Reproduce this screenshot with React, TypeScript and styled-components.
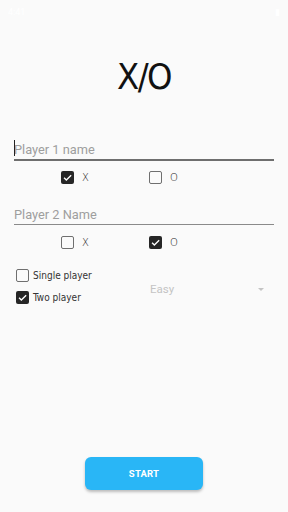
import React, { useState } from "react";
import styled, { createGlobalStyle } from "styled-components";

const Global = createGlobalStyle`
  html, body { margin: 0; padding: 0; background: #fafafa; }
  #root { height: 512px; }
`;

const Screen = styled.div`
  width: 288px;
  height: 512px;
  background: #fafafa;
  display: flex;
  flex-direction: column;
  font-family: Roboto, "Liberation Sans", sans-serif;
  box-sizing: border-box;
  overflow: hidden;
`;

const StatusBar = styled.div`
  height: 24px;
  display: flex;
  align-items: center;
  justify-content: space-between;
  padding: 0 8px;
  font-size: 9px;
  color: #ffffff;
`;

const Title = styled.h1`
  margin: 31px 0 0;
  text-align: center;
  font-family: "DejaVu Sans Condensed", "DejaVu Sans", sans-serif;
  font-weight: 300;
  font-size: 36px;
  line-height: 44px;
  letter-spacing: -1.5px;
  color: #111;
`;

const Field = styled.label<{ $focused?: boolean }>`
  display: flex;
  align-items: flex-end;
  margin: ${(p) => (p.$focused ? "38px" : "17px")} 14px 0;
  height: 22px;
  border-bottom: ${(p) => (p.$focused ? "2px solid #6e6e6e" : "1px solid #8a8a8a")};
  position: relative;
`;

const Input = styled.input`
  border: none;
  outline: none;
  background: transparent;
  width: 100%;
  padding: 0 0 2px;
  font-family: Roboto, "Liberation Sans", sans-serif;
  font-size: 12.8px;
  color: #222;
  caret-color: #111;
  &::placeholder { color: #9e9e9e; }
`;

const Caret = styled.span`
  position: absolute;
  left: 0;
  bottom: 3px;
  width: 1px;
  height: 16px;
  background: #222;
`;

const CheckRow = styled.div<{ $gap: number }>`
  display: flex;
  padding-left: 61px;
  margin-top: ${(p) => p.$gap}px;
  height: 16px;
  align-items: center;
`;

const Choice = styled.div`
  width: 88px;
  display: flex;
  align-items: center;
  gap: 8px;
`;

const BoxEl = styled.span<{ $checked: boolean }>`
  width: 13px;
  height: 13px;
  box-sizing: border-box;
  border-radius: 2px;
  border: ${(p) => (p.$checked ? "none" : "1.6px solid #6f6f6f")};
  background: ${(p) => (p.$checked ? "#262626" : "transparent")};
  display: inline-flex;
  align-items: center;
  justify-content: center;
  flex-shrink: 0;
`;

const Label = styled.span`
  font-family: "DejaVu Sans", sans-serif;
  font-size: 10px;
  font-weight: 300;
  color: #222;
`;

const ModeSection = styled.div`
  display: flex;
  margin-top: 19px;
  padding-left: 16px;
`;

const ModeList = styled.div`
  display: flex;
  flex-direction: column;
  gap: 9px;
  width: 134px;
`;

const ModeItem = styled.div`
  display: flex;
  align-items: center;
  gap: 4px;
  height: 13px;
`;

const ModeLabel = styled.span`
  font-family: "DejaVu Sans Condensed", "DejaVu Sans", sans-serif;
  font-size: 10px;
  color: #333;
`;

const Select = styled.div`
  flex: 1;
  display: flex;
  align-items: center;
  justify-content: space-between;
  padding-right: 24px;
  margin-top: 7px;
  height: 26px;
  font-family: Roboto, "Liberation Sans", sans-serif;
  font-size: 11.5px;
  color: #c4c4c4;
`;

const Arrow = styled.span`
  width: 0;
  height: 0;
  border-left: 3.5px solid transparent;
  border-right: 3.5px solid transparent;
  border-top: 3.5px solid #c4c4c4;
`;

const StartButton = styled.button`
  margin: auto auto 22px;
  width: 118px;
  height: 33px;
  border: none;
  border-radius: 6px;
  background: #29b6f6;
  color: #fff;
  font-family: Roboto, "Liberation Sans", sans-serif;
  font-weight: 700;
  font-size: 9.5px;
  letter-spacing: 0.2px;
  box-shadow: 0 2px 3px rgba(0, 0, 0, 0.25);
`;

const Check = ({ checked }: { checked: boolean }) => (
  <BoxEl $checked={checked}>
    {checked && (
      <svg width="11" height="11" viewBox="0 0 24 24">
        <path d="M4.5 12.5l5 5L20 7" fill="none" stroke="#fff" strokeWidth="3" />
      </svg>
    )}
  </BoxEl>
);

export default function App() {
  const [p1, setP1] = useState("");
  const [p2, setP2] = useState("");
  return (
    <Screen>
      <Global />
      <StatusBar>
        <span>4:41</span>
        <span>▮</span>
      </StatusBar>
      <Title>X/O</Title>
      <Field $focused>
        <Caret />
        <Input placeholder="Player 1 name" value={p1} onChange={(e) => setP1(e.target.value)} />
      </Field>
      <CheckRow $gap={8}>
        <Choice>
          <Check checked />
          <Label>X</Label>
        </Choice>
        <Choice>
          <Check checked={false} />
          <Label>O</Label>
        </Choice>
      </CheckRow>
      <Field>
        <Input placeholder="Player 2 Name" value={p2} onChange={(e) => setP2(e.target.value)} />
      </Field>
      <CheckRow $gap={9}>
        <Choice>
          <Check checked={false} />
          <Label>X</Label>
        </Choice>
        <Choice>
          <Check checked />
          <Label>O</Label>
        </Choice>
      </CheckRow>
      <ModeSection>
        <ModeList>
          <ModeItem>
            <Check checked={false} />
            <ModeLabel>Single player</ModeLabel>
          </ModeItem>
          <ModeItem>
            <Check checked />
            <ModeLabel>Two player</ModeLabel>
          </ModeItem>
        </ModeList>
        <Select>
          <span>Easy</span>
          <Arrow />
        </Select>
      </ModeSection>
      <StartButton>START</StartButton>
    </Screen>
  );
}
